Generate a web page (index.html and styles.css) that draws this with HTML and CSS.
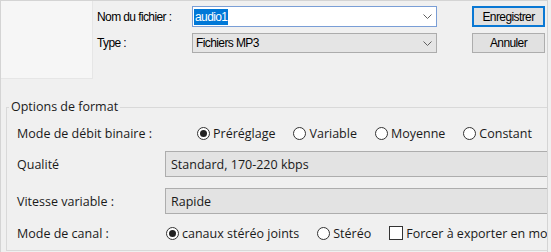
FILE: index.html
```html
<!DOCTYPE html>
<html lang="fr">
<head>
    <meta charset="UTF-8">
    <meta name="viewport" content="width=device-width, initial-scale=1.0">
    <title>Enregistrer sous</title>
    <link rel="stylesheet" href="styles.css">
</head>
<body>
    <div class="window">
        <div class="top">
            <div class="preview"></div>
            <div class="save-form">
                <label class="form-label">Nom du fichier :</label>
                <div class="combo editable">
                    <span class="value selected">audio1</span>
                    <svg class="chevron" width="9" height="5" viewBox="0 0 9 5"><path d="M0.5 0.5 L4.5 4.5 L8.5 0.5" fill="none" stroke="#606060" stroke-width="1"/></svg>
                </div>
                <button class="btn default">Enregistrer</button>
                <label class="form-label">Type :</label>
                <div class="combo">
                    <span class="value">Fichiers MP3</span>
                    <svg class="chevron" width="9" height="5" viewBox="0 0 9 5"><path d="M0.5 0.5 L4.5 4.5 L8.5 0.5" fill="none" stroke="#606060" stroke-width="1"/></svg>
                </div>
                <button class="btn">Annuler</button>
            </div>
        </div>

        <fieldset class="options">
            <legend>Options de format</legend>
            <div class="opt-row first">
                <span class="opt-label">Mode de débit binaire :</span>
                <div class="choices bitrate">
                    <span class="choice"><span class="radio checked"></span>Préréglage</span>
                    <span class="choice"><span class="radio"></span>Variable</span>
                    <span class="choice"><span class="radio"></span>Moyenne</span>
                    <span class="choice"><span class="radio"></span>Constant</span>
                </div>
            </div>
            <div class="opt-row field-row">
                <span class="opt-label">Qualité</span>
                <div class="field">Standard, 170-220 kbps</div>
            </div>
            <div class="opt-row field-row second">
                <span class="opt-label">Vitesse variable :</span>
                <div class="field">Rapide</div>
            </div>
            <div class="opt-row channel-row">
                <span class="opt-label">Mode de canal :</span>
                <div class="choices channel">
                    <span class="choice"><span class="radio checked"></span>canaux stéréo joints</span>
                    <span class="choice"><span class="radio"></span>Stéréo</span>
                    <span class="choice"><span class="check"></span>Forcer à exporter en mono</span>
                </div>
            </div>
        </fieldset>
    </div>
</body>
</html>
```

FILE: styles.css
```css
body {
    margin: 0;
    background-color: #f0f0f0;
    font-family: "Liberation Sans", Arial, sans-serif;
    color: #000;
}
.window {
    width: 546px;
    height: 251px;
    border-top: 1px solid #d4d4d4;
    border-left: 1px solid #d4d4d4;
    border-right: 1px solid #d4d4d4;
    overflow: hidden;
}
.top {
    display: flex;
    height: 98px;
}
.preview {
    flex-shrink: 0;
    width: 91px;
    height: 77px;
    background-color: #f6f6f6;
    border-right: 1px solid #e6e6e6;
    border-bottom: 1px solid #e6e6e6;
}
.save-form {
    display: grid;
    grid-template-columns: 95px 245px 35px 73px;
    grid-template-rows: 21px 20px;
    row-gap: 6px;
    align-items: center;
    padding: 5px 0 0 4px;
    align-self: flex-start;
}
.form-label {
    font-size: 12px;
    letter-spacing: -0.6px;
}
.combo {
    height: 100%;
    box-sizing: border-box;
    border: 1px solid #acacac;
    background-color: #e5e5e5;
    display: flex;
    align-items: center;
    justify-content: space-between;
    padding: 0 4px 0 3px;
    font-size: 12px;
    letter-spacing: -0.6px;
}
.combo.editable {
    background-color: #fff;
    border-color: #7a9ed6;
    padding-left: 1px;
}
.value.selected {
    background-color: #0078d7;
    color: #fff;
    padding: 2px 1px;
    line-height: 12px;
}
.btn {
    grid-column: 4;
    height: 100%;
    box-sizing: border-box;
    border: 1px solid #adadad;
    background-color: #e1e1e1;
    font-family: "Liberation Sans", Arial, sans-serif;
    font-size: 12px;
    letter-spacing: -0.6px;
    padding: 0;
    color: #000;
}
.btn.default {
    border: 2px solid #0a78d4;
}

.options {
    box-sizing: border-box;
    margin: 0 0 0 5px;
    padding: 0 9px 0 10px;
    height: 152px;
    border: 1px solid #d9d9d9;
    font-family: "Open Sans", "Noto Sans", sans-serif;
    font-size: 12.5px;
    color: #1a1a1a;
    overflow: hidden;
}
.options legend {
    padding: 0 2px;
    margin-left: -8px;
    line-height: 16px;
}
.opt-row {
    display: flex;
    align-items: center;
    height: 24px;
}
.opt-row.first {
    margin-top: 6px;
}
.opt-label {
    width: 148px;
    flex-shrink: 0;
}
.choices {
    display: flex;
    align-items: center;
    white-space: nowrap;
}
.choices.bitrate {
    padding-left: 32px;
    gap: 18px;
}
.choices.channel {
    padding-left: 1px;
    gap: 18px;
}
.choice {
    display: flex;
    align-items: center;
    gap: 3px;
}
.radio {
    width: 11px;
    height: 11px;
    border: 1px solid #333;
    border-radius: 50%;
    background-color: #fff;
    display: flex;
    align-items: center;
    justify-content: center;
}
.radio.checked::after {
    content: "";
    width: 7px;
    height: 7px;
    border-radius: 50%;
    background-color: #222;
}
.check {
    width: 12px;
    height: 12px;
    border: 1px solid #333;
    background-color: #fff;
}
.field-row {
    height: 26px;
    margin-top: 6px;
}
.field-row.second {
    margin-top: 11px;
}
.channel-row {
    margin-top: 7px;
}
.field {
    flex: 1;
    height: 100%;
    box-sizing: border-box;
    background-color: #e3e3e3;
    border: 1px solid #adadad;
    border-right-color: #e3e3e3;
    display: flex;
    align-items: center;
    padding-left: 5px;
}
```
